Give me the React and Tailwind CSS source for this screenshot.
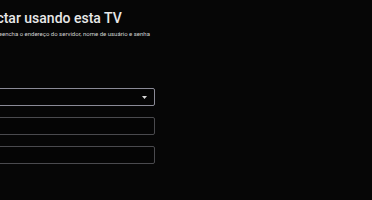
import React from 'react';

const App = () => {
  return (
    <div className="w-[372px] h-[200px] bg-[#060606] overflow-hidden font-['Roboto',sans-serif]">
      <div className="ml-[-36px] w-[191px] pt-[9px]">
        {/* Header */}
        <h1 className="text-[14px] leading-[18px] font-medium text-[#e8e8e8]">Conectar usando esta TV</h1>
        <p className="mt-[3px] ml-[29px] text-[6px] leading-[8px] text-[#d0d0d0] whitespace-nowrap">
          Preencha o endereço do servidor, nome de usuário e senha
        </p>

        {/* Form */}
        <div className="mt-[50px] flex flex-col gap-[11px]">
          <div className="h-[18px] rounded-[2px] border border-[#8a8a96] bg-[#050505] flex items-center justify-end pr-[7px]">
            <svg width="5" height="3" viewBox="0 0 5 3">
              <path d="M0 0h5L2.5 3z" fill="#d8d8d8" />
            </svg>
          </div>
          <div className="h-[18px] rounded-[2px] border border-[#4a4a4e] bg-[#050505]" />
          <div className="h-[18px] rounded-[2px] border border-[#4a4a4e] bg-[#050505]" />
        </div>
      </div>
    </div>
  );
};

export default App;
